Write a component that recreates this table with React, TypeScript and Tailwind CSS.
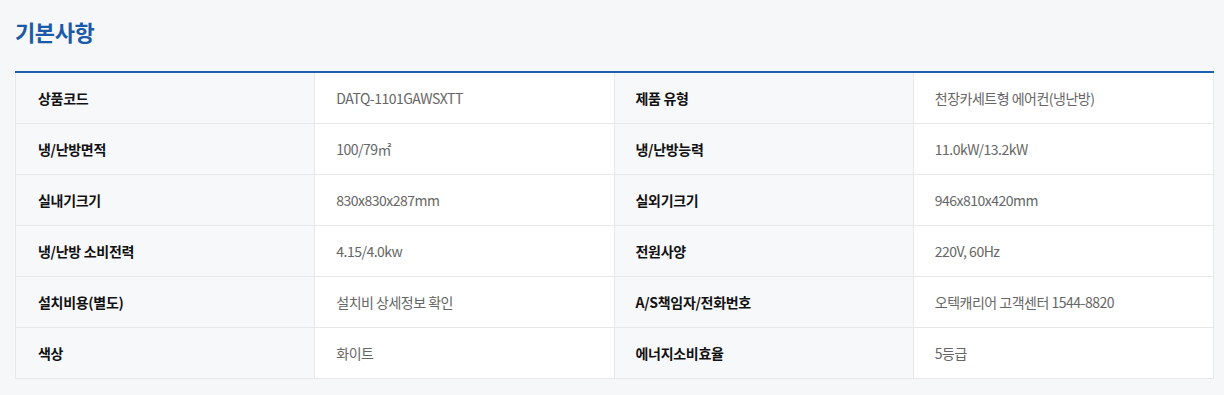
import React from "react";

const rows: [string, string, string, string][] = [
  ["상품코드", "DATQ-1101GAWSXTT", "제품 유형", "천장카세트형 에어컨(냉난방)"],
  ["냉/난방면적", "100/79㎡", "냉/난방능력", "11.0kW/13.2kW"],
  ["실내기크기", "830x830x287mm", "실외기크기", "946x810x420mm"],
  ["냉/난방 소비전력", "4.15/4.0kw", "전원사양", "220V, 60Hz"],
  ["설치비용(별도)", "설치비 상세정보 확인", "A/S책임자/전화번호", "오텍캐리어 고객센터 1544-8820"],
  ["색상", "화이트", "에너지소비효율", "5등급"],
];

export default function App() {
  return (
    <div
      className="w-[1224px] h-[395px] bg-[#f6f7f9] px-[15px] pt-[16px]"
      style={{ fontFamily: '"Noto Sans CJK KR", "Noto Sans", sans-serif' }}
    >
      <h2 className="text-[22px] leading-[30px] font-bold text-[#1a5aa8] tracking-[-0.4px]">기본사항</h2>
      <div className="mt-[25px] w-[1199px]">
        <div className="h-[2px] bg-[#1d5fb0]" />
        <div className="border-l border-r border-[#e6e8eb] grid grid-cols-4">
          {rows.map((r, i) => (
            <React.Fragment key={i}>
              <div className="h-[51px] flex items-center pl-[22px] bg-[#f7f8fa] border-b border-r border-[#e6e8eb] text-[14px] font-bold text-[#111] tracking-[-0.3px]">
                {r[0]}
              </div>
              <div className="h-[51px] flex items-center pl-[21px] bg-white border-b border-r border-[#e6e8eb] text-[14px] text-[#666] tracking-[-0.5px]">
                {r[1]}
              </div>
              <div className="h-[51px] flex items-center pl-[21px] bg-[#f7f8fa] border-b border-r border-[#e6e8eb] text-[14px] font-bold text-[#111] tracking-[-0.3px]">
                {r[2]}
              </div>
              <div className="h-[51px] flex items-center pl-[21px] bg-white border-b border-[#e6e8eb] text-[14px] text-[#666] tracking-[-0.5px]">
                {r[3]}
              </div>
            </React.Fragment>
          ))}
        </div>
      </div>
    </div>
  );
}
